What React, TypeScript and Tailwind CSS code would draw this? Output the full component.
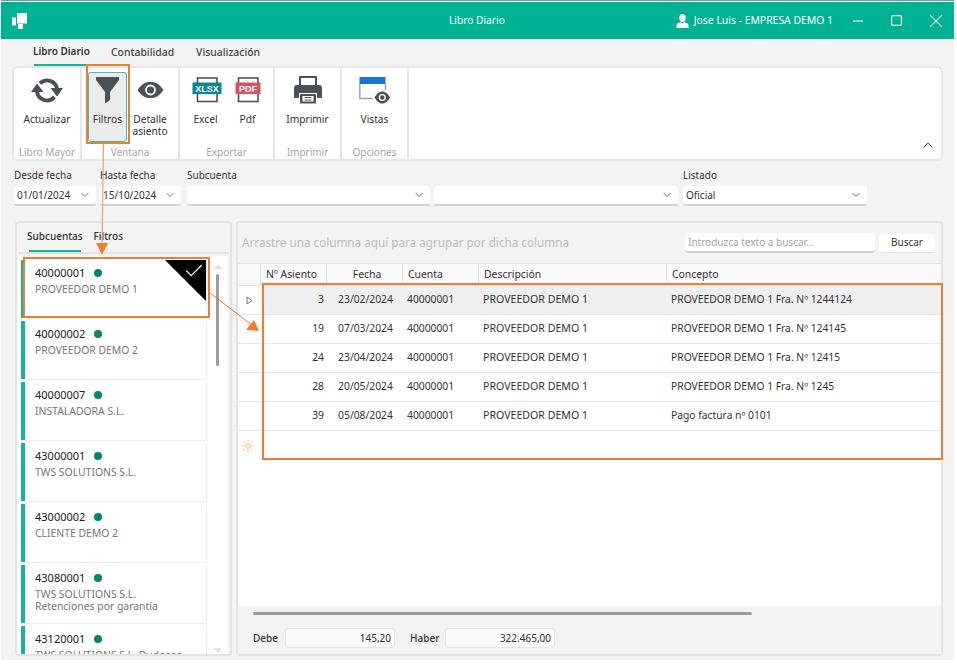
import { ChevronDown, ChevronUp, Minus, Square, X, Check, Sun } from "lucide-react";

const font = { fontFamily: '"Noto Sans", sans-serif' };

const accounts = [
  { code: "40000001", name: "PROVEEDOR DEMO 1", selected: true },
  { code: "40000002", name: "PROVEEDOR DEMO 2" },
  { code: "40000007", name: "INSTALADORA S.L." },
  { code: "43000001", name: "TWS SOLUTIONS S.L." },
  { code: "43000002", name: "CLIENTE DEMO 2" },
  { code: "43080001", name: "TWS SOLUTIONS S.L.", extra: "Retenciones por garantía" },
  { code: "43120001", name: "TWS SOLUTIONS S.L. Dudosos" },
];

const rows = [
  { n: "3", date: "23/02/2024", concept: "PROVEEDOR DEMO 1 Fra. Nº 1244124" },
  { n: "19", date: "07/03/2024", concept: "PROVEEDOR DEMO 1 Fra. Nº 124145" },
  { n: "24", date: "23/04/2024", concept: "PROVEEDOR DEMO 1 Fra. Nº 12415" },
  { n: "28", date: "20/05/2024", concept: "PROVEEDOR DEMO 1 Fra. Nº 1245" },
  { n: "39", date: "05/08/2024", concept: "Pago factura nº 0101" },
];

const gridCols = "grid grid-cols-[23px_66px_76px_76px_188px_1fr]";

const RefreshIcon = () => (
  <svg width="32" height="28" viewBox="0 0 32 28" fill="none">
    <path d="M9 7.5 A10 10 0 0 1 26 12.5" stroke="#4a5258" strokeWidth="3.8" />
    <path d="M23.5 21 A10 10 0 0 1 6 15.5" stroke="#4a5258" strokeWidth="3.8" />
    <path d="M19.5 12 H32 L26 20.5 Z" fill="#4a5258" />
    <path d="M0 16 H12.5 L6 7.5 Z" fill="#4a5258" />
  </svg>
);

const FunnelIcon = () => (
  <svg width="24" height="27" viewBox="0 0 24 27">
    <path d="M0 0 H23 V3 L14 15 V23 L9 26.5 V15 L0 3 Z" fill="#4a5258" />
  </svg>
);

const EyeIcon = ({ size = 27 }: { size?: number }) => (
  <svg width={size} height={(size * 16) / 27} viewBox="0 0 27 16">
    <path d="M0.5 8 C5 1.5 9 0 13.5 0 C18 0 22 1.5 26.5 8 C22 14.5 18 16 13.5 16 C9 16 5 14.5 0.5 8 Z" fill="#4a5258" />
    <circle cx="13.5" cy="8" r="5.4" fill="#fff" />
    <circle cx="13.5" cy="8" r="3.6" fill="#4a5258" />
  </svg>
);

const DocIcon = ({ label, color, banner, className }: { label: string; color: string; banner: number; className?: string }) => (
  <svg width="30" height="26" viewBox="0 0 30 26" className={className}>
    <rect x="5.5" y="1" width="19.5" height="23.5" fill="#fff" stroke="#4a5258" strokeWidth="1.6" />
    <rect x={15 - banner / 2} y="5.5" width={banner} height="11.5" fill={color} />
    <text x="15" y="14.6" textAnchor="middle" fontSize="9" fontWeight="700" fill="#fff" fontFamily='"Liberation Sans", sans-serif'>
      {label}
    </text>
  </svg>
);

const PrinterIcon = () => (
  <svg width="28" height="28" viewBox="0 0 28 28">
    <path d="M6 10 V1 H22 V10" fill="none" stroke="#4a5258" strokeWidth="2" />
    <path d="M3 9 H25 A3 3 0 0 1 28 12 V22 H23 V17 H5 V22 H0 V12 A3 3 0 0 1 3 9 Z" fill="#4a5258" />
    <path d="M6 18 H22 V27.5 H6 Z" fill="#4a5258" />
    <path d="M8.5 20 H19.5 V25.5 H8.5 Z" fill="#fff" />
    <path d="M10.5 21.5 H17.5 M10.5 24 H17.5" stroke="#4a5258" strokeWidth="1" />
  </svg>
);

const ViewsIcon = () => (
  <svg width="31" height="28" viewBox="0 0 31 28">
    <rect x="0.5" y="1" width="26" height="7" fill="#1a73d8" />
    <path d="M0.8 8 V22.5 H14 M26.5 8 V14" fill="none" stroke="#9aa0a6" strokeWidth="1.4" />
    <path d="M15.5 21.5 C18 17 21 15.5 23.25 15.5 C25.5 15.5 28.5 17 31 21.5 C28.5 26 25.5 27.5 23.25 27.5 C21 27.5 18 26 15.5 21.5 Z" fill="#4a5258" />
    <circle cx="23.25" cy="21.5" r="3.6" fill="#fff" />
    <circle cx="23.25" cy="21.5" r="2.2" fill="#4a5258" />
  </svg>
);

const Logo = () => (
  <svg width="16" height="16" viewBox="0 0 16 16" fill="#fff">
    <rect x="5" y="0" width="10" height="10.5" />
    <rect x="0" y="4.5" width="4" height="8" />
    <rect x="6" y="11" width="5" height="5" />
  </svg>
);

const UserIcon = () => (
  <svg width="13" height="14" viewBox="0 0 13 14" fill="#fff">
    <ellipse cx="6.5" cy="4" rx="3.2" ry="4" />
    <path d="M0.5 14 V11 C0.5 9.5 3 9 4.5 8 L6.5 9.5 L8.5 8 C10 9 12.5 9.5 12.5 11 V14 Z" />
  </svg>
);

const RibbonButton = ({ icon, label, width, active }: { icon: React.ReactNode; label: React.ReactNode; width: string; active?: boolean }) => (
  <div className={`flex h-[70px] flex-col items-center ${width} ${active ? "rounded-[3px] border border-[#3cc4a6] bg-[#ebebeb] pt-[3px]" : "pt-[4px]"}`}>
    <div className="flex h-[28px] items-center justify-center">{icon}</div>
    <div className="mt-[9px] text-center text-[10.2px] leading-[12px] text-[#333]">{label}</div>
  </div>
);

const RibbonGroup = ({ title, width, inner, children }: { title: string; width: string; inner?: string; children: React.ReactNode }) => (
  <div className={`flex h-full flex-col border-r-2 border-[#e6e6e6] ${width}`}>
    <div className={`flex flex-1 justify-center gap-[1px] pt-[4px] ${inner ?? ""}`}>{children}</div>
    <div className="text-center text-[10px] leading-[14px] text-[#a6a6a6]">{title}</div>
  </div>
);

const Field = ({ label, width, value, className }: { label?: string; width: string; value?: string; className?: string }) => (
  <div className={`flex flex-col ${width} ${className ?? ""}`}>
    <div className="h-[19px] text-[10px] leading-[17px] whitespace-nowrap text-[#333]">{label}</div>
    <div className="flex h-[20px] items-center justify-between rounded-[3px] border-b-2 border-[#d0d0d0] bg-white pr-[5px] pl-[3px] text-[10px] text-[#333]">
      <span>{value}</span>
      <ChevronDown size={12} strokeWidth={1.5} className="text-[#444]" />
    </div>
  </div>
);

const AccountCard = ({ code, name, extra, selected }: { code: string; name: string; extra?: string; selected?: boolean }) => (
  <div className="relative flex h-[59px] shrink-0 rounded-[2px] border-r border-b border-[#ececec] bg-white">
    <div className="w-[4px] shrink-0 bg-[#12b594]" />
    <div className="pt-[5px] pl-[10px]">
      <div className="flex items-center gap-[9px] text-[11px] leading-[15px] text-[#222]">
        {code}
        <span className="h-[8px] w-[8px] rounded-full bg-[#00866d]" />
      </div>
      <div className="mt-[2.5px] text-[10.4px] leading-[12.5px] whitespace-nowrap text-[#777]">
        {name}
        {extra && <div>{extra}</div>}
      </div>
    </div>
    {selected && (
      <div className="absolute top-0 right-0 h-[41px] w-[41px] bg-black [clip-path:polygon(0_0,100%_0,100%_100%)]">
        <Check size={22} strokeWidth={1.3} className="absolute top-0 right-[1px] text-white" />
      </div>
    )}
  </div>
);

const HeaderCell = ({ children, className }: { children?: React.ReactNode; className?: string }) => (
  <div className={`flex items-center border-r border-[#e3e3e3] pl-[5px] text-[10.4px] text-[#333] ${className ?? ""}`}>{children}</div>
);

export default function App() {
  return (
    <div className="relative h-[664px] w-[957px] overflow-hidden bg-white" style={font}>
      <div className="ml-[1px] flex h-[660px] w-[953px] flex-col border-t border-[#5fa8a0] bg-[#f3f3f3]">
        {/* title bar */}
        <div className="relative mt-[1px] flex h-[37px] shrink-0 items-center bg-[#00b294] text-white">
          <div className="ml-[11px]">
            <Logo />
          </div>
          <div className="absolute left-[448px] text-[10.2px]">Libro Diario</div>
          <div className="ml-auto flex items-center">
            <UserIcon />
            <span className="ml-[5px] text-[10.4px]">Jose Luis - EMPRESA DEMO 1</span>
            <Minus size={16} strokeWidth={1.5} className="ml-[17px]" />
            <Square size={13} strokeWidth={2} className="ml-[24px]" />
            <X size={22} strokeWidth={1.1} className="mr-[7px] ml-[22px]" />
          </div>
        </div>

        {/* ribbon tabs */}
        <div className="flex h-[27px] shrink-0 gap-[22px] pl-[32px] text-[10.4px] font-medium text-[#444]">
          <div className="flex h-full w-[56px] flex-col">
            <div className="flex flex-1 items-center text-[10px] font-semibold whitespace-nowrap text-[#333]">Libro Diario</div>
            <div className="ml-[1px] h-[2px] w-[53px] bg-[#12b594]" />
          </div>
          <div className="flex items-center">Contabilidad</div>
          <div className="flex items-center">Visualización</div>
        </div>

        {/* ribbon */}
        <div className="mx-[11px] flex h-[95px] shrink-0 rounded-[6px] border-2 border-[#e6e6e6] bg-white">
          <RibbonGroup title="Libro Mayor" width="w-[68px]">
            <RibbonButton icon={<RefreshIcon />} label="Actualizar" width="w-[60px]" />
          </RibbonGroup>
          <RibbonGroup title="Ventana" width="w-[98px]">
            <RibbonButton active icon={<FunnelIcon />} label="Filtros" width="w-[39px]" />
            <RibbonButton icon={<EyeIcon />} label={<>Detalle<br />asiento</>} width="w-[44px]" />
          </RibbonGroup>
          <RibbonGroup title="Exportar" width="w-[95px]" inner="pr-[3px]">
            <RibbonButton icon={<DocIcon label="XLSX" color="#0f8391" banner={29} className="ml-[3px]" />} label="Excel" width="w-[44px]" />
            <RibbonButton icon={<DocIcon label="PDF" color="#d9535f" banner={25} className="ml-[1px]" />} label="Pdf" width="w-[38px]" />
          </RibbonGroup>
          <RibbonGroup title="Imprimir" width="w-[67px]">
            <RibbonButton icon={<PrinterIcon />} label="Imprimir" width="w-[50px]" />
          </RibbonGroup>
          <RibbonGroup title="Opciones" width="w-[67px]">
            <RibbonButton icon={<ViewsIcon />} label="Vistas" width="w-[50px]" />
          </RibbonGroup>
          <div className="flex flex-1 items-end justify-end pr-[5px] pb-[6px]">
            <ChevronUp size={16} strokeWidth={1.4} className="text-[#444]" />
          </div>
        </div>

        {/* filters */}
        <div className="mt-[6px] ml-[13px] flex h-[40px] shrink-0">
          <Field label="Desde fecha" value="01/01/2024" width="w-[82px]" />
          <Field label="Hasta fecha" value="15/10/2024" width="w-[81px]" className="ml-[4px]" />
          <Field label="Subcuenta" width="w-[243px]" className="ml-[6px]" />
          <Field width="w-[244px]" className="ml-[4px]" />
          <Field label="Listado" value="Oficial" width="w-[184px]" className="ml-[5px]" />
        </div>

        {/* body */}
        <div className="mt-[14px] ml-[14px] flex h-[435px] w-[928px] gap-[4px]">
          {/* left panel */}
          <div className="flex w-[217px] flex-col rounded-[4px] border-2 border-[#e3e3e3] bg-[#f3f3f3]">
            <div className="mx-[1px] flex h-[31px] shrink-0 gap-[11px] border-b-2 border-[#e3e3e3] pl-[9px] text-[10px] font-medium text-[#333]">
              <div className="flex h-[29px] flex-col items-center">
                <div className="flex flex-1 items-center">Subcuentas</div>
                <div className="h-[2px] w-[52px] bg-[#12b594]" />
              </div>
              <div className="flex h-[27px] items-center">Filtros</div>
            </div>
            <div className="mt-[2px] mr-[2px] flex min-h-0 flex-1 overflow-hidden bg-white pt-[4px] pl-[4px]">
              <div className="flex w-[186px] flex-col gap-[2px] overflow-hidden">
                {accounts.map((a) => (
                  <AccountCard key={a.code} {...a} />
                ))}
              </div>
              <div className="flex w-[21px] flex-col items-center justify-between pt-[4px] pb-[1px]">
                <div className="h-0 w-0 border-x-[4px] border-b-[5px] border-x-transparent border-b-[#e3e3e3]" />
                <div className="mt-[5px] mb-auto h-[92px] w-[3px] rounded bg-[#9c9c9c]" />
                <div className="h-0 w-0 border-x-[4px] border-t-[5px] border-x-transparent border-t-[#e3e3e3]" />
              </div>
            </div>
          </div>

          {/* right panel */}
          <div className="flex min-w-0 flex-1 flex-col rounded-[4px] border-2 border-[#e3e3e3] bg-white">
            <div className="flex h-[40px] shrink-0 items-center justify-between bg-[#f3f3f3] pr-[6px] pl-[4px]">
              <span className="text-[11.7px] text-[#bcbcbc]">Arrastre una columna aquí para agrupar por dicha columna</span>
              <div className="flex items-center gap-[4px]">
                <div className="flex h-[20px] w-[190px] items-center rounded-[3px] border-b-2 border-[#d0d0d0] bg-white pl-[3px] text-[10px] text-[#a6a6a6]">Introduzca texto a buscar...</div>
                <div className="flex h-[19px] w-[56px] items-center justify-center rounded-[3px] border-b border-[#e0e0e0] bg-white text-[10px] text-[#333]">Buscar</div>
              </div>
            </div>
            <div className={`${gridCols} h-[23px] shrink-0 border-y border-[#e3e3e3] bg-[#f9f9f9]`}>
              <HeaderCell />
              <HeaderCell>Nº Asiento</HeaderCell>
              <HeaderCell className="justify-center pl-0">Fecha</HeaderCell>
              <HeaderCell>Cuenta</HeaderCell>
              <HeaderCell>Descripción</HeaderCell>
              <HeaderCell className="border-r-0">Concepto</HeaderCell>
            </div>
            <div className="flex-1">
              {rows.map((r, i) => (
                <div key={r.n} className={`${gridCols} h-[29px] border-b border-[#e8e8e8] text-[10.3px] text-[#333] ${i === 0 ? "bg-[#efefef]" : ""}`}>
                  <div className="flex items-center justify-center bg-white">
                    {i === 0 && (
                      <svg width="7" height="9" viewBox="0 0 7 9" fill="none">
                        <path d="M1 1 L6 4.5 L1 8 Z" stroke="#777" strokeWidth="1" />
                      </svg>
                    )}
                  </div>
                  <div className="flex items-center justify-end pr-[3px]">{r.n}</div>
                  <div className="flex items-center justify-center pl-[1px]">{r.date}</div>
                  <div className="flex items-center pl-[4px]">40000001</div>
                  <div className="flex items-center pl-[4px] text-[10.6px]">PROVEEDOR DEMO 1</div>
                  <div className="flex items-center pl-[4px]">{r.concept}</div>
                </div>
              ))}
              <div className={`${gridCols} h-[29px]`}>
                <div className="flex items-center pl-[3px]">
                  <Sun size={14} strokeWidth={1.6} className="text-[#f7a54a]" />
                </div>
              </div>
            </div>
            <div className="h-[48px] shrink-0 bg-[#f3f3f3] px-[15px] pt-[6px]">
              <div className="h-[3px] w-[499px] rounded-full bg-[#9c9c9c]" />
              <div className="mt-[13px] flex items-center text-[10px] text-[#333]">
                <span className="w-[32px] font-medium">Debe</span>
                <div className="flex h-[20px] w-[110px] items-center justify-end rounded-[3px] border border-[#e6e6e6] bg-[#f9f9f9] pr-[3px]">145,20</div>
                <span className="ml-[15px] w-[35px] font-medium">Haber</span>
                <div className="flex h-[20px] w-[110px] items-center justify-end rounded-[3px] border border-[#e6e6e6] bg-[#f9f9f9] pr-[3px]">322.465,00</div>
              </div>
            </div>
          </div>
        </div>
      </div>

      {/* orange annotations drawn over the screenshot */}
      <div className="absolute top-[64px] left-[86px] h-[80px] w-[44px] border-2 border-[#ed7d31]" />
      <div className="absolute top-[257px] left-[23px] h-[61px] w-[187px] border-2 border-[#ed7d31]" />
      <div className="absolute top-[283px] left-[262px] h-[177px] w-[681px] border-2 border-[#ed7d31]" />
      <svg className="absolute top-0 left-0" width="957" height="664" fill="none">
        <path d="M103.5 144 L102 245" stroke="#f0a070" strokeWidth="1.2" />
        <path d="M96 243 H108 L102 255 Z" fill="#ed7d31" />
        <path d="M210 293 L252 325" stroke="#ed7d31" strokeWidth="1" />
        <path d="M259 331 L246 330 L254 320 Z" fill="#ed7d31" />
      </svg>
    </div>
  );
}
